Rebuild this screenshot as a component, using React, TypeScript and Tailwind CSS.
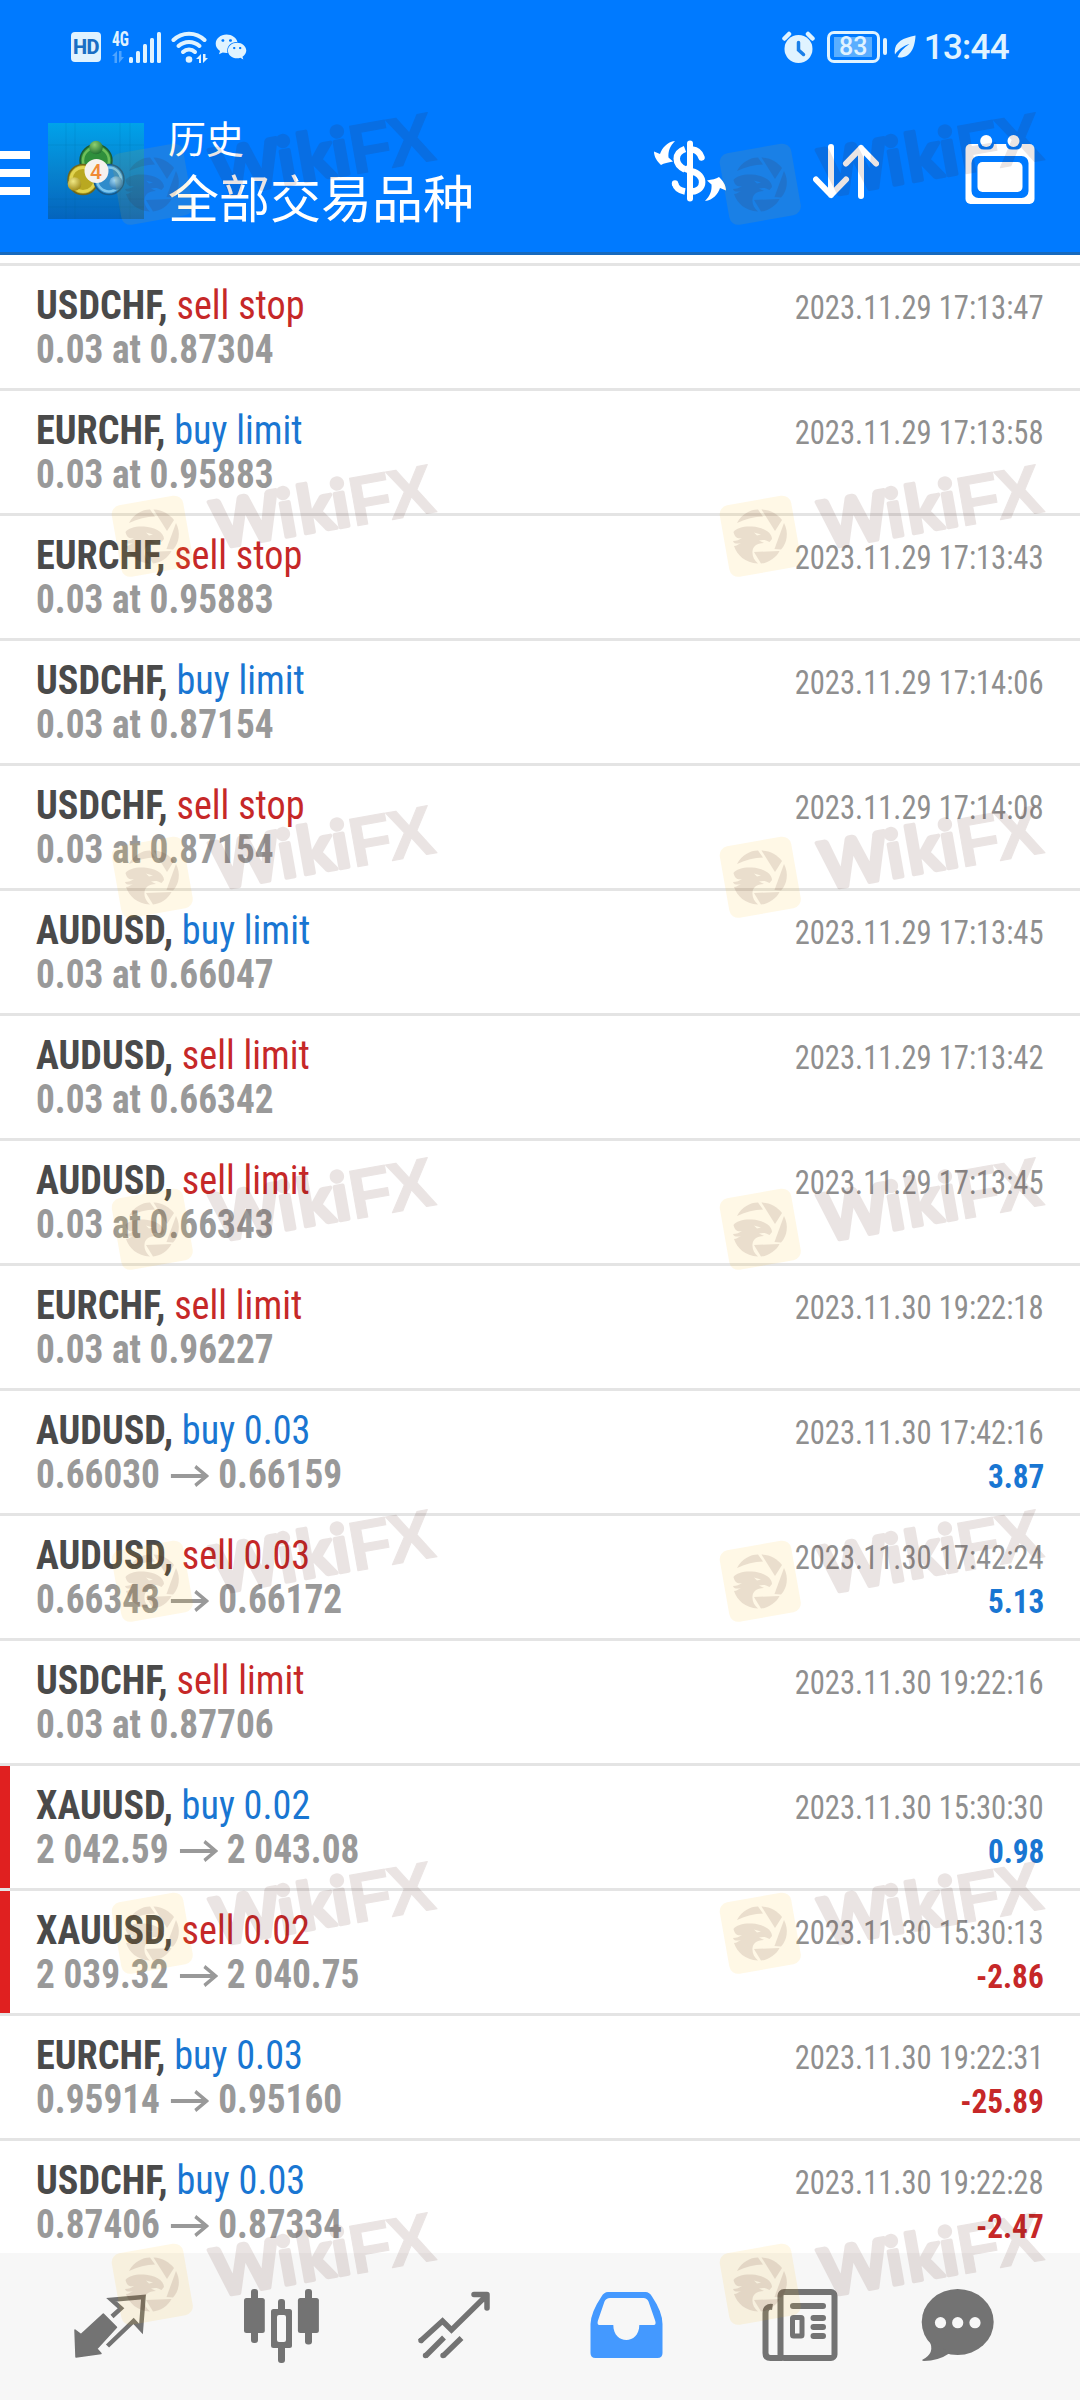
import type { ReactNode } from 'react';
import { FaWeixin } from 'react-icons/fa';

interface Deal {
  symbol: string;
  action: string;
  time: string;
  // pending orders have only a detail line, closed deals have open/close prices
  detail?: string;
  open?: string;
  close?: string;
  profit?: string;
  flagged?: boolean;
}

const deals: Deal[] = [
  { symbol: 'USDCHF', action: 'sell stop', detail: '0.03 at 0.87304', time: '2023.11.29 17:13:47' },
  { symbol: 'EURCHF', action: 'buy limit', detail: '0.03 at 0.95883', time: '2023.11.29 17:13:58' },
  { symbol: 'EURCHF', action: 'sell stop', detail: '0.03 at 0.95883', time: '2023.11.29 17:13:43' },
  { symbol: 'USDCHF', action: 'buy limit', detail: '0.03 at 0.87154', time: '2023.11.29 17:14:06' },
  { symbol: 'USDCHF', action: 'sell stop', detail: '0.03 at 0.87154', time: '2023.11.29 17:14:08' },
  { symbol: 'AUDUSD', action: 'buy limit', detail: '0.03 at 0.66047', time: '2023.11.29 17:13:45' },
  { symbol: 'AUDUSD', action: 'sell limit', detail: '0.03 at 0.66342', time: '2023.11.29 17:13:42' },
  { symbol: 'AUDUSD', action: 'sell limit', detail: '0.03 at 0.66343', time: '2023.11.29 17:13:45' },
  { symbol: 'EURCHF', action: 'sell limit', detail: '0.03 at 0.96227', time: '2023.11.30 19:22:18' },
  { symbol: 'AUDUSD', action: 'buy 0.03', open: '0.66030', close: '0.66159', profit: '3.87', time: '2023.11.30 17:42:16' },
  { symbol: 'AUDUSD', action: 'sell 0.03', open: '0.66343', close: '0.66172', profit: '5.13', time: '2023.11.30 17:42:24' },
  { symbol: 'USDCHF', action: 'sell limit', detail: '0.03 at 0.87706', time: '2023.11.30 19:22:16' },
  { symbol: 'XAUUSD', action: 'buy 0.02', open: '2 042.59', close: '2 043.08', profit: '0.98', time: '2023.11.30 15:30:30', flagged: true },
  { symbol: 'XAUUSD', action: 'sell 0.02', open: '2 039.32', close: '2 040.75', profit: '-2.86', time: '2023.11.30 15:30:13', flagged: true },
  { symbol: 'EURCHF', action: 'buy 0.03', open: '0.95914', close: '0.95160', profit: '-25.89', time: '2023.11.30 19:22:31' },
  { symbol: 'USDCHF', action: 'buy 0.03', open: '0.87406', close: '0.87334', profit: '-2.47', time: '2023.11.30 19:22:28' },
];

const watermarkTops = [104, 456, 797, 1149, 1501, 1853, 2204];

function StatusBar() {
  return (
    <div className="flex h-[93px] items-center justify-between px-[71px] text-[#e0f3ff]">
      <div className="flex items-center">
        <div className="flex h-[30px] w-[30px] items-center justify-center rounded-[4px] bg-[#e0f3ff] font-[Roboto] text-[20px] leading-none font-extrabold tracking-[-0.5px] text-[#1a6fc4]">
          HD
        </div>
        <svg className="ml-[10px] h-[32px] w-[51px] overflow-visible" viewBox="0 0 51 32" fill="currentColor">
          <text x="1" y="15" fontFamily="Roboto Condensed" fontWeight="700" fontSize="20" textLength="17" lengthAdjust="spacingAndGlyphs">
            4G
          </text>
          <g opacity="0.35">
            <path d="M6 20v12H3.500V25H1zM8 20v12l5-6h-2.500v-6z" />
          </g>
          <rect x="18" y="26" width="4" height="6" rx="1.500" />
          <rect x="25" y="20" width="4" height="12" rx="1.500" />
          <rect x="32" y="13" width="4" height="19" rx="1.500" />
          <rect x="39" y="7" width="4" height="25" rx="1.500" />
          <rect x="46" y="1" width="4" height="31" rx="1.500" />
        </svg>
        <svg className="ml-[9px] h-[32px] w-[38px]" viewBox="0 0 38 32" fill="none" stroke="currentColor" strokeWidth="4" strokeLinecap="round">
          <path d="M2.500 9C11 0.500 25 0.500 33.500 9" />
          <path d="M7.500 15C13.500 9.500 22.500 9.500 28.500 15" />
          <path d="M12 21C15.500 17.500 20.500 17.500 24 21" />
          <circle cx="18" cy="28.500" r="3.300" fill="currentColor" stroke="none" />
          <path d="M30 23v9h-2v-4h-3zM32 23v9l5-5h-2.500v-4z" fill="currentColor" stroke="none" />
        </svg>
        <FaWeixin className="ml-[6px] h-[32px] w-[32px]" />
      </div>
      <div className="flex items-center">
        <svg className="h-[32px] w-[33px]" viewBox="0 0 33 32" fill="currentColor">
          <path d="M2.500 7.500 7 3M30.500 7.500 26 3" stroke="currentColor" strokeWidth="4.500" strokeLinecap="round" />
          <circle cx="16.500" cy="18" r="14" />
          <path d="M16.500 11.500v7.500l5 4.500" fill="none" stroke="#1a7fe8" strokeWidth="3.500" strokeLinecap="round" />
        </svg>
        <div className="ml-[12px] flex h-[32px] w-[53px] items-center justify-center rounded-[7px] border-[3px] border-current">
          <div className="flex h-[20px] w-[38px] items-center justify-center bg-[#5aaeff] font-[Roboto] text-[25px] leading-none font-medium">
            83
          </div>
        </div>
        <div className="ml-[3px] h-[17px] w-[4px] rounded-sm bg-current" />
        <svg className="ml-[7px] h-[23px] w-[22px]" viewBox="0 0 22 23" fill="currentColor">
          <path d="M21.500 0.500C21 12 17 22.500 6 22.500c-1.500 0-2.500-.5-2.500-.5 2-5 6-9 12-13C9 11 4 15 1 19.500-1 8 8 3 21.500.500z" />
        </svg>
        <span className="ml-[8px] pt-px font-[Roboto] text-[35px] leading-none font-medium tracking-[-0.7px]">13:44</span>
      </div>
    </div>
  );
}

function AppLogo() {
  return (
    <svg className="h-24 w-24" viewBox="0 0 96 96">
      <defs>
        <linearGradient id="logo-bg" x1="0" y1="0" x2="0" y2="1">
          <stop offset="0" stopColor="#00a2ea" />
          <stop offset="0.5" stopColor="#0783cf" />
          <stop offset="1" stopColor="#0464bd" />
        </linearGradient>
        <radialGradient id="logo-green" cx="0.4" cy="0.3" r="0.8">
          <stop offset="0" stopColor="#8fd070" />
          <stop offset="1" stopColor="#14662a" />
        </radialGradient>
        <radialGradient id="logo-yellow" cx="0.4" cy="0.3" r="0.8">
          <stop offset="0" stopColor="#f0e884" />
          <stop offset="1" stopColor="#97800c" />
        </radialGradient>
        <radialGradient id="logo-blue" cx="0.4" cy="0.3" r="0.8">
          <stop offset="0" stopColor="#9fd6f4" />
          <stop offset="1" stopColor="#1565a5" />
        </radialGradient>
      </defs>
      <rect width="96" height="96" fill="url(#logo-bg)" />
      <path d="M18 0v96M27 0v96M72 0v96M82 0v96M0 22h96M0 76h96M0 84h96" stroke="#0a5c9c" strokeOpacity="0.15" />
      <circle cx="48" cy="37.500" r="16" fill="#2f8f3c" stroke="#1c5a35" strokeWidth="1.500" />
      <circle cx="48" cy="37.500" r="13" fill="none" stroke="#6cbf5a" strokeWidth="2.500" />
      <circle cx="35" cy="56.500" r="15" fill="#b9a821" stroke="#6e671c" strokeWidth="1.500" />
      <circle cx="35" cy="56.500" r="12" fill="none" stroke="#e0d450" strokeWidth="3" />
      <circle cx="61" cy="56.500" r="15" fill="#2f8ccb" stroke="#155a8c" strokeWidth="1.500" />
      <circle cx="61" cy="56.500" r="12" fill="none" stroke="#7cc6ee" strokeWidth="2.500" />
      <circle cx="48" cy="24.500" r="6.800" fill="url(#logo-green)" />
      <circle cx="26.500" cy="61" r="6.800" fill="url(#logo-yellow)" />
      <circle cx="68" cy="60" r="6.800" fill="url(#logo-blue)" />
      <circle cx="48.500" cy="48" r="12" fill="#f5f2ee" />
      <text x="48" y="55.500" textAnchor="middle" fontFamily="Roboto" fontWeight="500" fontSize="21" fill="#f08a35">
        4
      </text>
    </svg>
  );
}

function Toolbar() {
  return (
    <div className="flex h-[159px] items-start">
      <div className="mt-[58px] flex w-[30px] flex-col gap-[10px]">
        <div className="h-2 bg-white" />
        <div className="h-2 bg-white" />
        <div className="h-2 bg-white" />
      </div>
      <div className="mt-[30px] ml-[18px]">
        <AppLogo />
      </div>
      <div className="mt-[17px] ml-[24px] flex-1 font-['Noto_Sans_CJK_SC',sans-serif] text-white">
        <div className="text-[38px] leading-[54px]">历史</div>
        <div className="text-[51px] leading-[64px]">全部交易品种</div>
      </div>
      <svg className="mt-[47px] h-[62px] w-[72px]" viewBox="0 0 72 62" fill="none" stroke="white" strokeWidth="6.500">
        <path d="M36 3.500v55" strokeLinecap="round" strokeWidth="6" />
        <path d="M31 9C20 13 20 24 31 29.500M31 51.500C25 50.500 22 47.500 21 43.500" />
        <path d="M38 9.500C43 10 46 12.500 47.500 17.500" strokeLinecap="round" />
        <path d="M31 28.500 38 31.500C51.500 34.500 51.500 50.500 38 51.500" />
        <circle cx="21" cy="43.500" r="3.200" fill="white" stroke="none" />
        <g fill="white" stroke="none">
          <path id="swap-arrow" d="M21 1C13 2 8 8 6 14L0 11.500C0 17 3 21 7 25 10 23 14 22.500 19 21.500L14.500 17.500C14 11 16 6 21 1z" />
          <use href="#swap-arrow" transform="rotate(180 36 31)" />
        </g>
      </svg>
      <svg className="mt-[51px] ml-[87px] h-[56px] w-[66px]" viewBox="0 0 66 56" fill="none" stroke="white" strokeWidth="6" strokeLinecap="round" strokeLinejoin="round">
        <path d="M18 3v48M3 35.500 18 51l15-15.500" />
        <path d="M48 52V4M33 19.500 48 4l15 15.500" />
      </svg>
      <svg className="mt-[41px] mr-[45px] ml-[86px] h-[71px] w-[70px]" viewBox="0 0 70 71" fill="white">
        <rect x="0.500" y="10" width="69" height="60" rx="5" />
        <path d="M13 9v0.500q0 6 6 6h4q6 0 6-6V9zM41 9v0.500q0 6 6 6h4q6 0 6-6V9z" fill="#007aff" />
        <rect x="6.500" y="22" width="57" height="42" rx="7" fill="#007aff" />
        <rect x="12.500" y="28" width="45" height="30" rx="5" />
        <circle cx="21.200" cy="7" r="6" />
        <circle cx="48.500" cy="7" r="6" />
      </svg>
    </div>
  );
}

function DealRow({ deal }: { deal: Deal }) {
  const isBuy = deal.action.startsWith('buy');
  const isLoss = deal.profit?.startsWith('-');
  return (
    <div className="flex h-[125px] shrink-0 border-t-[3px] border-[#e4e4e4] bg-white font-['Roboto_Condensed',sans-serif] whitespace-nowrap">
      <div className={deal.flagged ? 'w-[10px] bg-[#e02020]' : 'w-[10px]'} />
      <div className="flex flex-1 justify-between pr-[36px] pl-[26px]">
        <div className="flex flex-col items-start pt-[17px] text-[41px] leading-[44px]">
          <div className="origin-left scale-x-[0.932]">
            <span className="font-bold text-[#4a4a4a]">{deal.symbol}, </span>
            <span className={isBuy ? 'text-[#1976d2]' : 'text-[#c62828]'}>{deal.action}</span>
          </div>
          <div className="flex origin-left scale-x-[0.91] font-bold text-[#999999]">
            {deal.detail ?? (
              <>
                {deal.open}
                <svg className="mr-[10px] ml-[12px] mt-[13px] h-[22px] w-[42px]" viewBox="0 0 42 22" fill="none" stroke="currentColor" strokeWidth="4">
                  <path d="M0 11h39" />
                  <path d="M27 1.500 39.500 11 27 20.500" strokeWidth="3.500" />
                </svg>
                {deal.close}
              </>
            )}
          </div>
        </div>
        <div className="flex flex-col items-end pt-[19px] text-[34px] leading-[44px]">
          <div className="origin-right scale-x-[0.9] text-[#8f8f8f]">{deal.time}</div>
          {deal.profit && (
            <div className={`origin-right scale-x-[0.92] font-bold ${isLoss ? 'text-[#c62828]' : 'text-[#1976d2]'}`}>
              {deal.profit}
            </div>
          )}
        </div>
      </div>
    </div>
  );
}

function NavIcon({ children, className = '' }: { children: ReactNode; className?: string }) {
  return (
    <svg className={`h-24 w-24 ${className}`} viewBox="0 0 96 96" fill="none">
      {children}
    </svg>
  );
}

function BottomNav() {
  return (
    <nav className="flex h-[147px] shrink-0 gap-[76px] bg-[#f7f7f7] pt-[25px] pl-[62px] text-[#737373]">
      <NavIcon>
        <path
          d="M13 52 19 56.500 41.300 36 54.500 49.300 34.800 70.700 39 75.500 14 79z"
          fill="currentColor"
          stroke="currentColor"
          strokeWidth="1.500"
          strokeLinejoin="round"
        />
        <path d="M50 38.500 59 30.300 49.500 21.700 81.500 19 79 51 71.600 43 45.500 68" stroke="currentColor" strokeWidth="4.500" />
      </NavIcon>
      <NavIcon>
        <g fill="currentColor">
          <rect x="10" y="20" width="20.800" height="35" rx="2.500" />
          <rect x="17" y="11" width="7" height="54" rx="3" />
          <rect x="63.900" y="20" width="21" height="35" rx="2.500" />
          <rect x="71" y="11" width="7" height="55.500" rx="3" />
          <rect x="37" y="31" width="21" height="39" rx="2.500" />
          <rect x="44" y="21" width="7" height="64" rx="3" />
        </g>
        <rect x="43" y="37" width="9" height="27" rx="2" fill="#f7f7f7" />
      </NavIcon>
      <NavIcon>
        <g stroke="currentColor" strokeWidth="5.500">
          <path d="M14 63.500 36.500 43 45.500 52 80 18" />
          <path d="M68 16.500h13v13.500" strokeLinecap="round" strokeLinejoin="round" />
          <path d="M38 59.500 19.500 78M55.500 60 37 78" />
        </g>
        <path d="M72 16h10v12z" fill="currentColor" />
        <g fill="currentColor">
          <circle cx="15" cy="62.500" r="2.700" />
          <circle cx="19.500" cy="77.500" r="2.700" />
          <circle cx="37" cy="77.500" r="2.700" />
        </g>
      </NavIcon>
      <NavIcon>
        <path
          fill="#4499ff"
          fillRule="evenodd"
          d="M30 14h37.500q4 0 6.500 4.500Q84.500 34 84.500 46v29q0 5-5 5h-62q-5 0-5-5V46Q13 34 23.500 18.500 26 14 30 14zM32 20q-4 0-5.500 3.500L19.800 43q-.8 4 1.500 4h14c0 20 26 20 26 0h14.500q2.500 0 1.500-4L70.500 23.500Q69 20 65.500 20z"
        />
      </NavIcon>
      <NavIcon>
        <rect x="30.500" y="14" width="54" height="66" rx="3.500" stroke="currentColor" strokeWidth="6" />
        <path d="M22.500 29Q15.500 28 15.500 35v40q0 5 5 5h12" stroke="currentColor" strokeWidth="6" />
        <g stroke="currentColor" strokeWidth="6" strokeLinecap="round">
          <path d="M43 28h30M63.500 40h9.500M63.500 49h9.500M63.500 58h9.500" />
        </g>
        <rect x="42.500" y="39.500" width="9.500" height="18.500" rx="1" stroke="currentColor" strokeWidth="5" />
      </NavIcon>
      <NavIcon className="-ml-3">
        <g fill="currentColor">
          <ellipse cx="47.700" cy="44" rx="36" ry="33" />
          <path d="M19 62Q26 75 12 82 12.500 83 14 83 28 83 40 75z" />
        </g>
        <g fill="#f7f7f7">
          <circle cx="30.500" cy="44.700" r="5.600" />
          <circle cx="47.700" cy="44.700" r="5.600" />
          <circle cx="65" cy="44.700" r="5.600" />
        </g>
      </NavIcon>
    </nav>
  );
}

function Watermark() {
  return (
    <svg className="h-[140px] w-[350px] overflow-visible" viewBox="0 0 350 140">
      <rect x="16" y="44" width="72.500" height="72.500" rx="9" transform="rotate(-10 52.200 80.200)" fill="#ffbe0a" fillOpacity="0.1" />
      <g opacity="0.11" fill="#49130a">
        {/* shutter blades round the eagle head */}
        <path d="M29 67C34 58 42 53.500 50 53.500L55 60.500C46 60.500 38 63 29 67z" />
        <path d="M53.500 53.500C63 54 69 58 74 64L67 75z" />
        <path d="M76 67C81 77 79 87 73 93.500L66.500 93z" />
        <path d="M46 96 71.500 95C68 102 60 107 53 107.500z" />
        <path
          fillRule="evenodd"
          d="M25.500 76C28 72 36 70 44 70.500 54 71 64 76 64 83L61.500 86C58 83.500 54 83.500 51 84.500L56 87C48 87 45 91 44.500 95 44 100 46 104 50 107.500 37 107 29 99 26 90 29 90 30 88 33 87 29 88 26 88 25 85 29 85 31 84 34 82 30 83 27 82 25.500 76zM46 76.500 49 79.500 53 78.500z"
        />
        <g transform="translate(107.700 96.600) rotate(-10)" stroke="#49130a" strokeLinejoin="round">
          <text x="9 76 96 131" y="-2" fontFamily="Lato" fontWeight="700" fontSize="66" strokeWidth="4">
            Wiki
          </text>
          <text x="148 187" y="-0.500" fontFamily="Liberation Sans" fontWeight="700" fontSize="70" strokeWidth="1">
            FX
          </text>
        </g>
      </g>
    </svg>
  );
}

export default function App() {
  return (
    <div className="relative flex h-[2400px] w-[1080px] flex-col overflow-hidden bg-white">
      <header className="h-[255px] shrink-0 border-b-[3px] border-[#1769bd] bg-[#007aff]">
        <StatusBar />
        <Toolbar />
      </header>
      <main className="flex min-h-0 flex-1 flex-col overflow-hidden pt-2">
        {deals.map((deal, i) => (
          <DealRow key={i} deal={deal} />
        ))}
      </main>
      <BottomNav />

      {watermarkTops.map((top) => (
        <div key={top} className="pointer-events-none absolute left-[100px] flex gap-[258px]" style={{ top }}>
          <Watermark />
          <Watermark />
        </div>
      ))}
    </div>
  );
}
